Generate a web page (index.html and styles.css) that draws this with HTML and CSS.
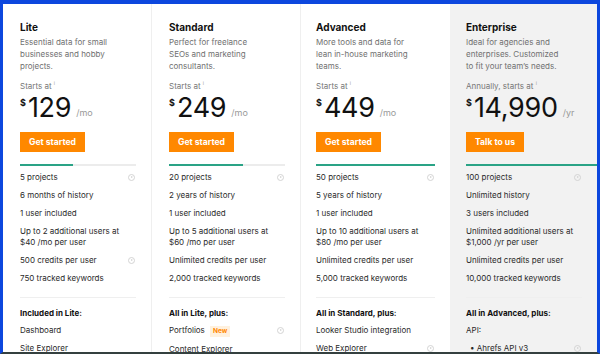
FILE: index.html
```html
<!DOCTYPE html>
<html>
<head>
<meta charset="utf-8">
<link rel="stylesheet" href="styles.css">
</head>
<body>
<div class="frame">
  <div class="plans">
    <section class="plan">
      <h2 class="name">Lite</h2>
      <p class="desc">Essential data for small businesses and hobby projects.</p>
      <div class="starts">Starts at <span class="i">i</span></div>
      <div class="price"><span class="cur">$</span><span class="amt">129</span><span class="per">/mo</span></div>
      <a class="btn">Get started</a>
      <div class="bar"><span class="fill" style="width:46%"></span></div>
      <ul class="feats">
        <li><span>5 projects</span><span class="info"></span></li>
        <li><span>6 months of history</span></li>
        <li><span>1 user included</span></li>
        <li><span>Up to 2 additional users at $40 /mo per user</span></li>
        <li><span>500 credits per user</span><span class="info"></span></li>
        <li><span>750 tracked keywords</span></li>
      </ul>
      <div class="sep"></div>
      <h3 class="inc">Included in Lite:</h3>
      <ul class="tools">
        <li><span>Dashboard</span></li>
        <li><span>Site Explorer</span></li>
      </ul>
    </section>
    <section class="plan">
      <h2 class="name">Standard</h2>
      <p class="desc">Perfect for freelance SEOs and marketing consultants.</p>
      <div class="starts">Starts at <span class="i">i</span></div>
      <div class="price"><span class="cur">$</span><span class="amt">249</span><span class="per">/mo</span></div>
      <a class="btn">Get started</a>
      <div class="bar"><span class="fill" style="width:64%"></span></div>
      <ul class="feats">
        <li><span>20 projects</span><span class="info"></span></li>
        <li><span>2 years of history</span></li>
        <li><span>1 user included</span></li>
        <li><span>Up to 5 additional users at $60 /mo per user</span></li>
        <li><span>Unlimited credits per user</span></li>
        <li><span>2,000 tracked keywords</span></li>
      </ul>
      <div class="sep"></div>
      <h3 class="inc">All in Lite, plus:</h3>
      <ul class="tools">
        <li><span>Portfolios <span class="new">New</span></span><span class="info"></span></li>
        <li><span>Content Explorer</span></li>
      </ul>
    </section>
    <section class="plan adv">
      <h2 class="name">Advanced</h2>
      <p class="desc">More tools and data for lean in-house marketing teams.</p>
      <div class="starts">Starts at <span class="i">i</span></div>
      <div class="price"><span class="cur">$</span><span class="amt">449</span><span class="per">/mo</span></div>
      <a class="btn">Get started</a>
      <div class="bar"><span class="fill" style="width:100%"></span></div>
      <ul class="feats">
        <li><span>50 projects</span><span class="info"></span></li>
        <li><span>5 years of history</span></li>
        <li><span>1 user included</span></li>
        <li><span>Up to 10 additional users at $80 /mo per user</span></li>
        <li><span>Unlimited credits per user</span></li>
        <li><span>5,000 tracked keywords</span></li>
      </ul>
      <div class="sep"></div>
      <h3 class="inc">All in Standard, plus:</h3>
      <ul class="tools">
        <li><span>Looker Studio integration</span></li>
        <li><span>Web Explorer</span><span class="info"></span></li>
      </ul>
    </section>
    <section class="plan ent">
      <h2 class="name">Enterprise</h2>
      <p class="desc">Ideal for agencies and enterprises. Customized to fit your team’s needs.</p>
      <div class="starts">Annually, starts at <span class="i">i</span></div>
      <div class="price"><span class="cur">$</span><span class="amt">14,990</span><span class="per">/yr</span></div>
      <a class="btn">Talk to us</a>
      <div class="bar full"><span class="fill" style="width:100%"></span></div>
      <ul class="feats">
        <li><span>100 projects</span><span class="info"></span></li>
        <li><span>Unlimited history</span></li>
        <li><span>3 users included</span></li>
        <li><span>Unlimited additional users at $1,000 /yr per user</span></li>
        <li><span>Unlimited credits per user</span></li>
        <li><span>10,000 tracked keywords</span></li>
      </ul>
      <div class="sep"></div>
      <h3 class="inc">All in Advanced, plus:</h3>
      <ul class="tools">
        <li><span>API:</span></li>
        <li class="sub"><span>• Ahrefs API v3</span><span class="info"></span></li>
      </ul>
    </section>
  </div>
</div>
</body>
</html>
```

FILE: styles.css
```css
* { box-sizing: border-box; }
html, body { margin: 0; padding: 0; }
body {
  width: 600px;
  height: 354px;
  overflow: hidden;
  font-family: Inter, "Noto Sans", sans-serif;
  font-size: 8px;
  background: #fff;
}
.frame {
  width: 600px;
  height: 354px;
  border-top: 4px solid #0d47de;
  border-left: 3px solid #0d47de;
  border-right: 3px solid #0d47de;
  border-bottom: 2px solid #34403f;
  overflow: hidden;
}
.plans {
  display: grid;
  grid-template-columns: 149px 149px 149px 1fr;
  height: 100%;
}
.plan {
  padding: 17px 15px 0 17px;
  border-right: 1px solid #efefef;
  color: #222;
  min-width: 0;
}
.plan.adv { border-right: none; padding-left: 15px; }
.plan.ent { background: #f2f2f2; border-right: none; padding-left: 16px; }
.name {
  margin: 0;
  font-size: 10px;
  line-height: 12px;
  font-weight: 700;
  color: #111;
}
.desc {
  margin: 3px 0 0;
  font-size: 8px;
  line-height: 12px;
  color: #707070;
  width: 96px;
}
.starts {
  margin-top: 8px;
  height: 12px;
  font-size: 8px;
  line-height: 12px;
  color: #777;
}
.starts .i { font-size: 5px; line-height: 0; vertical-align: 4px; color: #999; }
.price {
  display: flex;
  align-items: flex-start;
  margin-top: 3px;
  height: 26px;
  line-height: 26px;
  color: #111;
}
.cur {
  font-size: 9px;
  line-height: 10px;
  font-weight: 700;
  margin-top: 3px;
  margin-right: 2px;
}
.amt {
  font-size: 27px;
  font-weight: 400;
  letter-spacing: -0.3px;
}
.per {
  font-size: 9px;
  color: #999;
  margin-left: 5px;
  margin-top: 5px;
}
.btn {
  display: flex;
  width: fit-content;
  align-items: center;
  justify-content: center;
  margin-top: 11px;
  height: 20px;
  padding: 0 9px;
  background: #ff8800;
  color: #fff;
  font-size: 8.6px;
  font-weight: 700;
}
.bar {
  margin-top: 12px;
  height: 2px;
  background: #ececec;
}
.bar.full { margin-right: -15px; }
.fill {
  display: block;
  height: 2px;
  background: #2aa386;
}
.feats, .tools {
  list-style: none;
  margin: 5.5px 0 0;
  padding: 0;
  display: flex;
  flex-direction: column;
  gap: 7px;
}
.feats li, .tools li {
  display: flex;
  justify-content: space-between;
  align-items: flex-start;
  font-size: 8px;
  line-height: 11px;
  color: #2a2a2a;
}
.feats li > span:first-child, .tools li > span:first-child { max-width: 108px; }
.tools { margin-top: 6px; gap: 7px; }
.tools li.sub { padding-left: 4px; }
.info {
  flex: none;
  width: 7px;
  height: 7px;
  margin-top: 2px;
  margin-right: 1px;
  border: 1px solid #d4d4d4;
  border-radius: 50%;
  position: relative;
}
.info::after {
  content: "";
  position: absolute;
  left: 2px;
  top: 1px;
  border-left: 2px solid #d0d0d0;
  border-top: 1.5px solid transparent;
  border-bottom: 1.5px solid transparent;
}
.sep {
  margin-top: 13px;
  height: 1px;
  background: #efefef;
}
.inc {
  margin: 10px 0 0;
  font-size: 8px;
  line-height: 11px;
  font-weight: 700;
  color: #111;
}
.new {
  display: inline-block;
  margin-left: 3px;
  padding: 0 3px;
  background: #fff1de;
  color: #ff8800;
  font-size: 6.5px;
  font-weight: 700;
  line-height: 11px;
}
```
